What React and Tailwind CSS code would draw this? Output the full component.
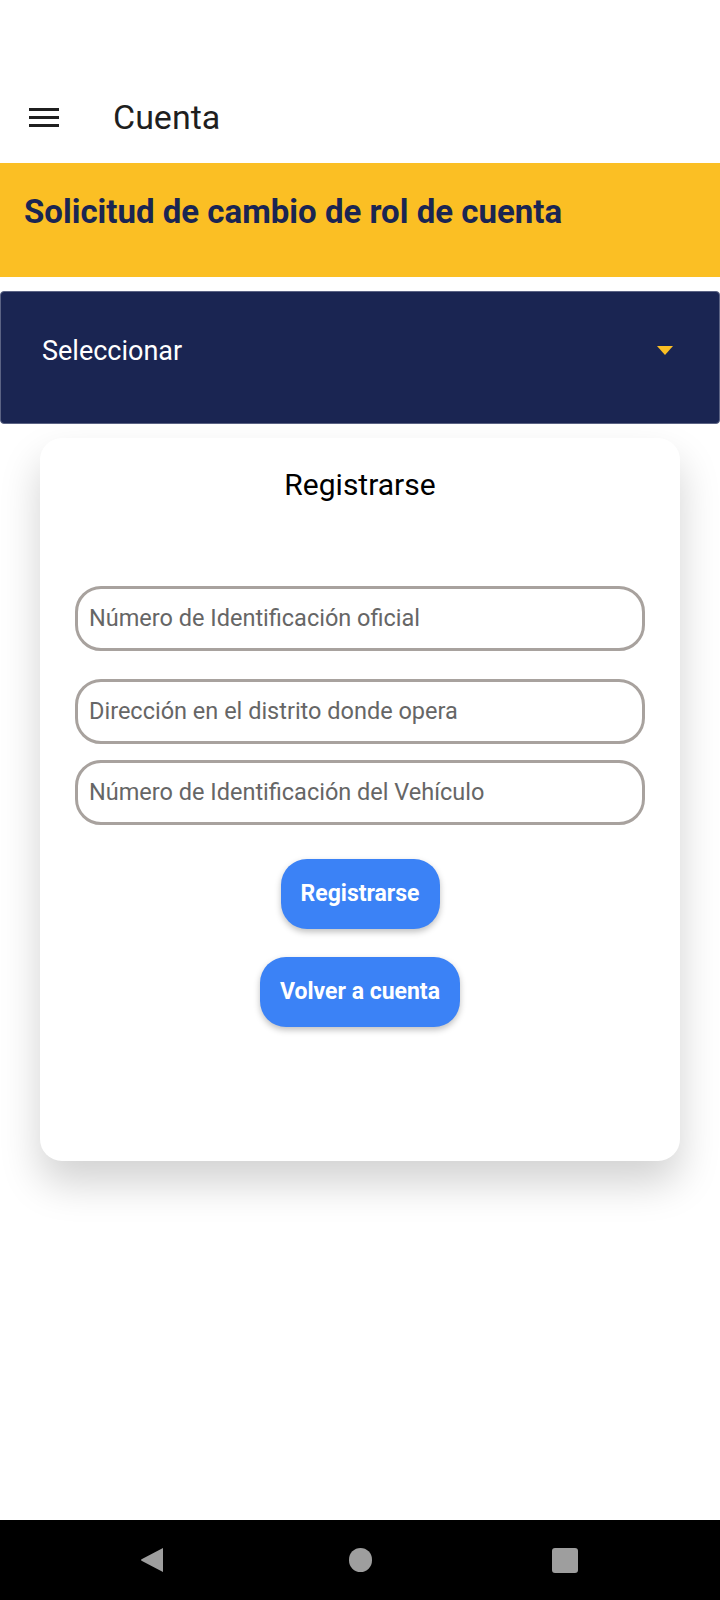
export default function App() {
  const fields = [
    { label: "Número de Identificación oficial", gap: "mt-[83px]" },
    { label: "Dirección en el distrito donde opera", gap: "mt-[28px]" },
    { label: "Número de Identificación del Vehículo", gap: "mt-[16px]" }
  ]

  return (
    <div className="w-[720px] h-[1600px] bg-white flex flex-col font-['Roboto','Liberation_Sans',sans-serif]">
      {/* app bar */}
      <div className="h-[163px] flex items-end pb-[27px]">
        <div className="flex items-center h-[38px]">
          <div className="ml-[29px] w-[30px] flex flex-col gap-[5px]">
            <span className="block h-[3px] bg-[#1f1f1f]" />
            <span className="block h-[3px] bg-[#1f1f1f]" />
            <span className="block h-[3px] bg-[#1f1f1f]" />
          </div>
          <span className="ml-[54px] text-[34px] leading-[38px] text-[#1f1f1f]">Cuenta</span>
        </div>
      </div>

      {/* yellow heading */}
      <div className="h-[114px] bg-[#fbbf24] px-[24px] pt-[30px]">
        <h1 className="text-[33px] leading-[38px] font-bold text-[#1a2552]">
          Solicitud de cambio de rol de cuenta
        </h1>
      </div>

      {/* select */}
      <div className="mt-[14px] h-[133px] bg-[#1a2552] rounded-[4px] border border-[#5b6384] flex items-center justify-between pl-[41px] pr-[46px] pb-[14px]">
        <span className="text-[27px] leading-[32px] text-white">Seleccionar</span>
        <svg width="16" height="10" viewBox="0 0 16 10">
          <path d="M0 0 H16 L8 9 Z" fill="#fbbf24" />
        </svg>
      </div>

      {/* card */}
      <div className="mt-[14px] mx-[40px] h-[723px] bg-white rounded-[22px] shadow-[0_22px_40px_rgba(0,0,0,0.18)] px-[35px] pt-[29px] flex flex-col items-center">
        <h2 className="text-[30px] leading-[36px] text-black">Registrarse</h2>

        {fields.map((f) => (
          <div
            key={f.label}
            className={`${f.gap} w-full h-[65px] rounded-[26px] border-[3px] border-[#a8a29e] flex items-center pl-[11px]`}
          >
            <span className="text-[23.5px] text-[#666666]">{f.label}</span>
          </div>
        ))}

        <button className="mt-[34px] h-[70px] px-[20px] rounded-[26px] bg-[#3b82f6] text-white font-bold text-[23px] shadow-[0_3px_6px_rgba(0,0,0,0.25)]">
          Registrarse
        </button>
        <button className="mt-[28px] h-[70px] px-[20px] rounded-[26px] bg-[#3b82f6] text-white font-bold text-[23px] shadow-[0_3px_6px_rgba(0,0,0,0.25)]">
          Volver a cuenta
        </button>
      </div>

      <div className="flex-1" />

      {/* android nav bar */}
      <div className="h-[80px] bg-black flex items-center">
        <div className="ml-[140px] w-[24px] h-[26px]">
          <svg width="24" height="26" viewBox="0 0 24 26">
            <path d="M23 1 V25 L2 14 Q0 13 2 12 Z" fill="#9e9e9e" />
          </svg>
        </div>
        <div className="ml-[185px] w-[23px] h-[24px] rounded-full bg-[#9e9e9e]" />
        <div className="ml-[180px] w-[26px] h-[25px] rounded-[3px] bg-[#9e9e9e]" />
      </div>
    </div>
  )
}
